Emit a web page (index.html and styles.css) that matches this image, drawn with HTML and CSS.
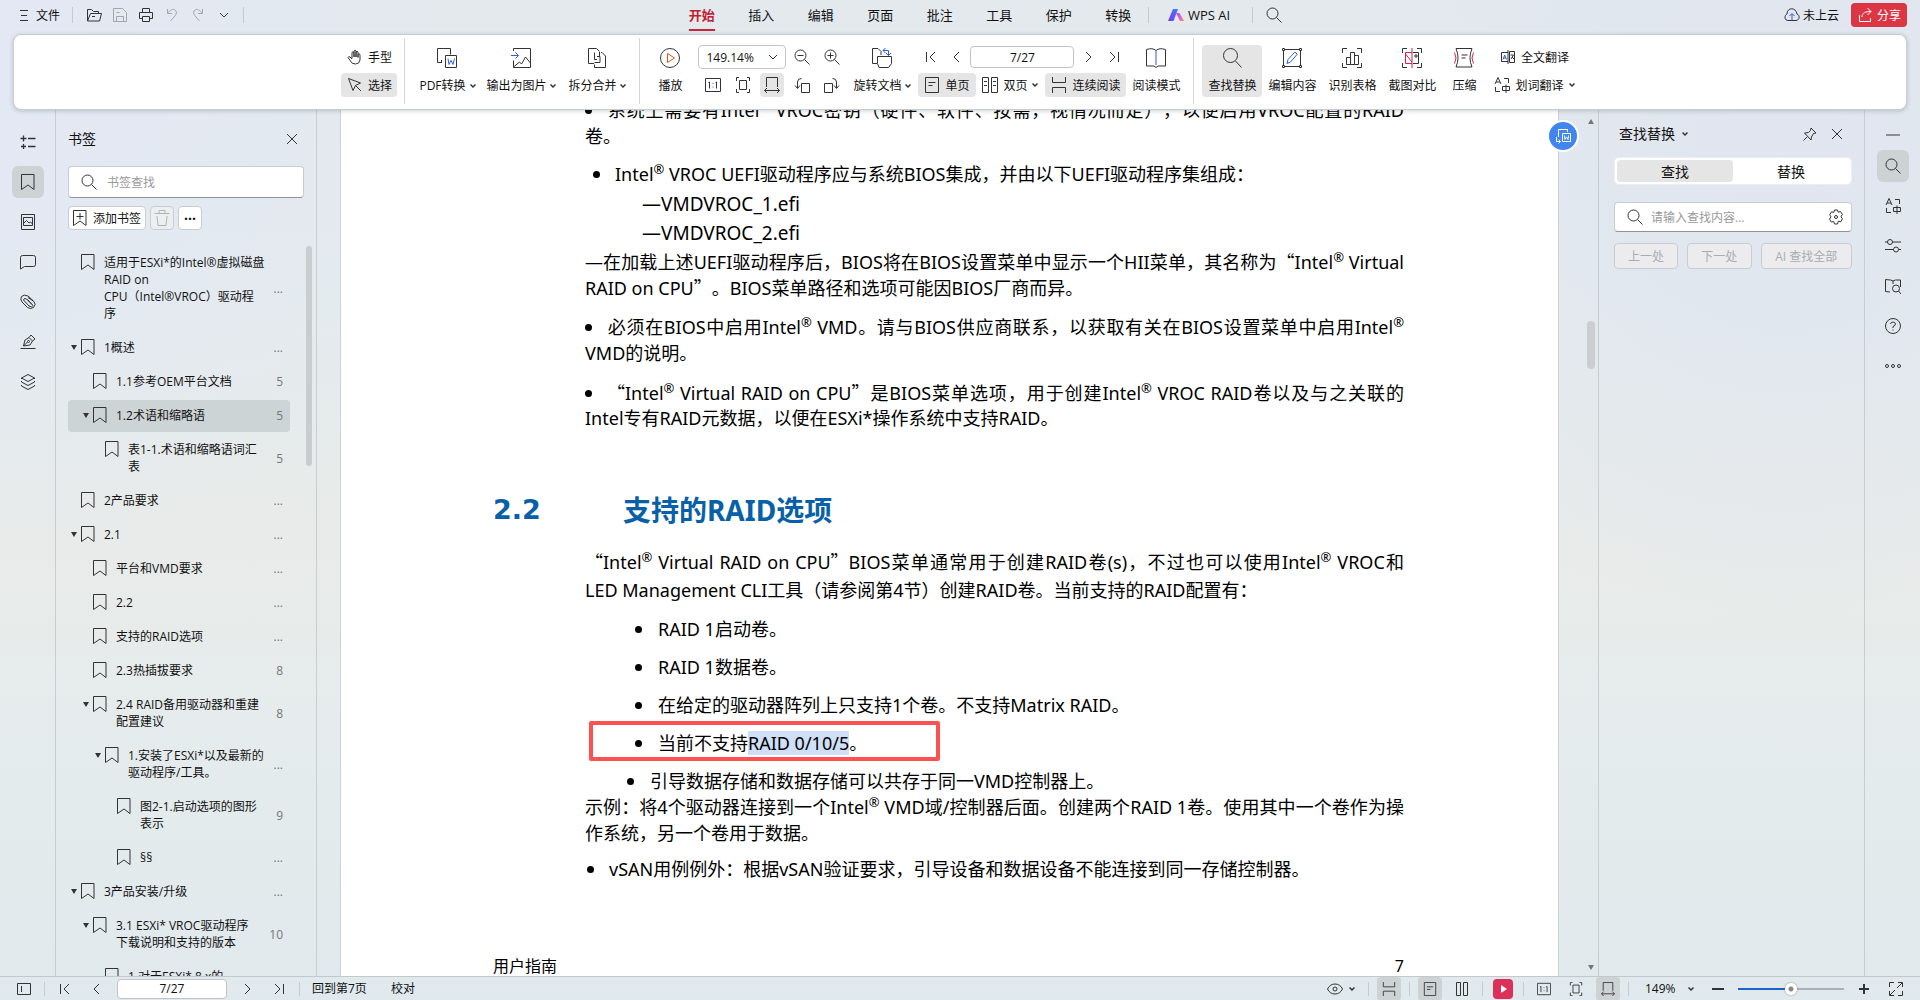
FILE: index.html
```html
<!DOCTYPE html>
<html lang="zh-CN">
<head>
<meta charset="utf-8">
<title>WPS PDF</title>
<link rel="stylesheet" href="styles.css">
</head>
<body>
<svg class="defs" aria-hidden="true">
  <symbol id="menu" viewBox="0 0 16 16"><path d="M4 3.500h8M5 8.500h6M4 13.500h8"/></symbol>
  <symbol id="folder" viewBox="0 0 16 16"><path d="M1.500 14V2.500h4l2 2h5v2M1.500 14l3-7.500h11l-2 7.500h-12M6 9.500h3"/></symbol>
  <symbol id="save" viewBox="0 0 16 16"><path d="M1.500 1.500h9l4 4v9h-13zM4.500 14.500v-5h7v5M4.500 5.500h3"/></symbol>
  <symbol id="print" viewBox="0 0 16 16"><path d="M4.500 5.500v-4h7v4M4.500 11.500h-3v-6h13v6h-3M4.500 9.500h7v5h-7z"/></symbol>
  <symbol id="undo" viewBox="0 0 16 16"><path d="M3.500 2v4.500h4.500M3.500 6.500C6 3 9 1.500 11 3c3 2.500 1 5-4.500 11"/></symbol>
  <symbol id="redo" viewBox="0 0 16 16"><path d="M12.500 2v4.500h-4.500M12.500 6.500C10 3 7 1.500 5 3c-3 2.500-1 5 4.500 11"/></symbol>
  <symbol id="chev" viewBox="0 0 10 10"><path d="M1 3l4 4 4-4"/></symbol>
  <symbol id="caret" viewBox="0 0 6 6"><path d="M.5 1.500L3 4l2.500-2.500" stroke-width="1.500"/></symbol>
  <symbol id="search" viewBox="0 0 16 16"><circle cx="6.500" cy="6.500" r="5.500"/><path d="M10.500 10.500L15.500 15.500"/></symbol>
  <symbol id="cloud" viewBox="0 0 16 16"><path d="M5 13.500C-.5 14 .5 8 3 7c0-7 9-7 10 0 3 1 3 6-1 6.500z"/><path class="blue" d="M8 13V7M5.500 9L8 6.500 10.500 9"/></symbol>
  <symbol id="share" viewBox="0 0 16 16"><path d="M2.500 8v6.500h11V11M5 10c0-4 3-5.500 9-5.500M10.500 1L14 4.500 10.500 8"/></symbol>
  <symbol id="hand" viewBox="0 0 16 16"><path d="M5 9.500V3.500q1-1.500 2 0V8 2q1-1.500 2 0v6-5q1-1.500 2 0v5.500-3q1-1.500 2 0V11q-.5 4-4.500 4T3.500 12L1 8.500q.5-1.500 2-.5l2 2"/></symbol>
  <symbol id="cursor" viewBox="0 0 16 16"><path d="M1.500 1.500l12 4.500-5 2.500L6 13.500zM8.500 8.500l5.500 5.500"/></symbol>
  <symbol id="pdfw" viewBox="0 0 20 20"><path d="M5 14.500H.5v-14H13.500v6M8.500 7.500h11v12h-11zM4.500 12v2.500"/><path class="blue" d="M11 10.500l1 6 2-4 2 4 1.500-6"/></symbol>
  <symbol id="outimg" viewBox="0 0 20 20"><path d="M2.500 3V.5h17v19h-17v-7M2.500 19l6-5 2 2 4-7 5 6"/><path class="blue" d="M0 7.500h7M4.500 4.500l3 3-3 3"/></symbol>
  <symbol id="split" viewBox="0 0 20 20"><path d="M7 15.500H1.500V.5h8l3 3M12.500 4v4.500M7.500 4.500v7H10M14 4.500h1l3.500 3.500v11.500h-11v-3M10 8.500h3v6h-5.500"/></symbol>
  <symbol id="play" viewBox="0 0 20 20"><circle cx="10" cy="10" r="9.500"/><path class="orange" d="M7.500 5.500l7 4.500-7 4.500z"/></symbol>
  <symbol id="zout" viewBox="0 0 16 16"><circle cx="6.500" cy="6.500" r="5.500"/><path d="M10.500 10.500L15.500 15.500M3.500 6.500h6"/></symbol>
  <symbol id="zin" viewBox="0 0 16 16"><circle cx="6.500" cy="6.500" r="5.500"/><path d="M10.500 10.500L15.500 15.500M3.500 6.500h6M6.500 3.500v6"/></symbol>
  <symbol id="one" viewBox="0 0 16 16"><path d="M.5 1.500h15v13h-15zM3.500 5.500l1-.5v6.500M10.500 5.500l1-.5v6.500"/><path class="blue" d="M8 6v1M8 9.500v1"/></symbol>
  <symbol id="fitp" viewBox="0 0 16 16"><path d="M4.500 3.500h7v9h-7zM1.500 4V.5H4M12 .5h2.500V4M1.500 12v3.500H4M12 15.500h2.500V12"/></symbol>
  <symbol id="fitw" viewBox="0 0 16 16"><path d="M2.500 10V.5h11V10M.5 13.500h15M3 11L.5 13.500 3 16M13 11l2.500 2.500L13 16"/></symbol>
  <symbol id="rotl" viewBox="0 0 16 16"><path d="M7.500 6.500h8v9h-8zM3.500 11V5q0-3.500 4-3.500M1 8.500l2.500 3 2.500-3"/></symbol>
  <symbol id="rotr" viewBox="0 0 16 16"><path d="M.5 6.500h8v9h-8zM12.500 11V5q0-3.500-4-3.500M10 8.500l2.500 3 2.500-3"/></symbol>
  <symbol id="rotdoc" viewBox="0 0 20 20"><path d="M5 15.500H.5V.5H6l3 3V7M7 19.500l-1.500-4v-7h14v7l-3 4z"/><path class="blue" d="M11 2.500h5.500v5M13.500 0L11 2.500 13.500 5M14 5l2.500 2.500L19 5"/></symbol>
  <symbol id="first" viewBox="0 0 12 12"><path d="M1.500 1v10M10 1L5 6l5 5"/></symbol>
  <symbol id="prev" viewBox="0 0 12 12"><path d="M8 1L3 6l5 5"/></symbol>
  <symbol id="next" viewBox="0 0 12 12"><path d="M4 1l5 5-5 5"/></symbol>
  <symbol id="last" viewBox="0 0 12 12"><path d="M10.500 1v10M2 1l5 5-5 5"/></symbol>
  <symbol id="single" viewBox="0 0 16 16"><path d="M1.500 .5h13v15h-13zM4.500 5.500h7M4.500 8.500h4"/></symbol>
  <symbol id="double" viewBox="0 0 16 16"><path d="M.5 .5h6v15h-6zM9.500 .5h6v15h-6zM2 4.500h3M2 8.500h3M11 4.500h3M11 8.500h3"/></symbol>
  <symbol id="dbl2" viewBox="0 0 16 16"><path d="M2.500 1.500h4v13h-4zM9.500 1.500h4v13h-4z"/></symbol>
  <symbol id="cont" viewBox="0 0 16 16"><path d="M1.500 0v5.500h13V0M1.500 16v-5.500h13V16"/></symbol>
  <symbol id="book" viewBox="0 0 20 20"><path d="M.5 1.500q6-2 9.500 1 3.500-3 9.500-1v16.500h-7.500l-2 1.500-2-1.500H.5z"/><path class="blue" d="M10 3v14"/></symbol>
  <symbol id="find" viewBox="0 0 20 20"><circle cx="8.500" cy="7.500" r="7"/><path d="M13.500 13l6 6.500"/></symbol>
  <symbol id="editc" viewBox="0 0 20 20"><path d="M3 1.500h14M3 18.500h14M1.500 3v14M18.500 3v14M.5 .5h2v2h-2zM17.500 .5h2v2h-2zM.5 17.500h2v2h-2zM17.500 17.500h2v2h-2z"/><path class="blue" d="M5 15.500l1-4 6.500-7q2-.5 2.500 2l-6.500 7.500z"/></symbol>
  <symbol id="table" viewBox="0 0 20 20"><path d="M5 .5H.5V5M15 .5h4.500V5M.5 15v4.500H5M19.500 15v4.500H15M4.500 9.500h4v7h-4zM8.500 4.500h4v12h-4zM12.500 7.500h4v9h-4z"/></symbol>
  <symbol id="cmp" viewBox="0 0 20 20"><path d="M5 .5H.5V5M15 .5h4.500V5M.5 15v4.500H5M19.500 15v4.500H15M11 4.500h5.500v11H11M13 7h2v2h-2z"/><path class="red" d="M10 0v20M10 4.500H3.500v11H10M3.500 6L10 14"/></symbol>
  <symbol id="zip" viewBox="0 0 20 20"><path d="M2 .5h16q-4 9.500 0 18.500H2Q6 10 2 .5zM7.500 7h6M7.500 10h4"/><path class="red" d="M.5 4.500q3 5.500 0 11M19.500 4.500q-3 5.500 0 11"/></symbol>
  <symbol id="trans" viewBox="0 0 16 16"><path d="M8 3.500H1.500v9H8M9.500 2.500h5v11h-5zM8 1v14M10.500 6h3l-2.500 4M12 8l2 2"/><path class="blue" d="M3 10.500L4.700 6l1.800 4.500M3.500 9h2.500"/></symbol>
  <symbol id="word" viewBox="0 0 16 16"><path d="M1 7L4 .5 7 7M2 5h4M10 1.500h4.500V6M1.500 10v4.500H6M8.500 9.500h7v4h-7zM12 7.500V16"/></symbol>
  <symbol id="bm" viewBox="0 0 14 16"><path d="M.5 .5h12.500v15l-6-4.500-6.500 4.500z"/></symbol>
  <symbol id="bmadd" viewBox="0 0 14 16"><path d="M.5 .5h12.500v15l-6-4.500-6.500 4.500zM7 3v6.500M3.500 6.500h7"/></symbol>
  <symbol id="trash" viewBox="0 0 16 16"><path d="M.5 3.500h15M5 3.500V.5h6v3M3 6l1 9.500h8L13 6"/></symbol>
  <symbol id="outline" viewBox="0 0 16 16"><path d="M8 4.500h7.500M8 12.500h7.500M3.500 1.500v6M.5 4.500h6M3.500 10v5M1 12.500h5" stroke-width="1.300"/></symbol>
  <symbol id="thumb" viewBox="0 0 16 16"><path d="M1.500 .5h13v15h-13zM3.500 3.500h9v8h-9zM3.500 9.500l3-3 2.500 2.500 1.500-1 2 2"/></symbol>
  <symbol id="comment" viewBox="0 0 16 16"><path d="M2.500 1.500h11q2 0 2 2v7q0 2-2 2H4.500L.5 15V3.500q0-2 2-2z"/></symbol>
  <symbol id="clip" viewBox="0 0 16 16"><path d="M13 6.500L8 2Q4 0 1.500 2.500 0 5 2 8l5.500 5.500q3 2 6 0 3-3 .5-6L8 3.500M12 10.500L6.500 5Q4 3.500 3.500 6L9 12q3 2 4-.5L7.500 5.500"/></symbol>
  <symbol id="pen" viewBox="0 0 16 16"><path d="M.5 14.500h15M3.500 12l1.500-6 4-2.500 3.500 3.500-2.500 4zM9 3.500L11 1l4 4-2.500 2M3.500 12l4-4"/><circle cx="8.500" cy="7.500" r="1"/></symbol>
  <symbol id="layers" viewBox="0 0 16 16"><path d="M8 .5l6.500 3.500L8 7.500 1.500 4zM1.500 7v1L8 11.500 14.500 8V7M1.500 11v1L8 15.500 14.500 12v-1M1.500 4v1M14.500 4v1"/></symbol>
  <symbol id="x" viewBox="0 0 12 12"><path d="M1 1l10 10M11 1L1 11"/></symbol>
  <symbol id="pin" viewBox="0 0 14 14"><path d="M8 1l5 5-2.500.5L8.500 10l-.5 3L1.500 6l4-.5 2-2zM4.500 9.500L.5 13.500"/></symbol>
  <symbol id="gear" viewBox="0 0 16 16"><path d="M6.500 1h3l.7 2.200 2.300-.7 1.800 2.800L13 7.800l1.500 2-1.800 3-2.400-.7L9.500 15h-3l-.8-2.500-2.400.6-1.800-3L3 7.800l-1.300-2 1.800-3 2.300.6z"/><circle cx="8" cy="8" r="1.500"/></symbol>
  <symbol id="sliders" viewBox="0 0 16 16"><circle cx="5" cy="4" r="2.500"/><circle cx="11" cy="11.500" r="2.500"/><path d="M0 4h2.500M7.500 4H16M0 11.500h8.500M13.500 11.500H16"/></symbol>
  <symbol id="dict" viewBox="0 0 16 16"><path d="M5 14L.5 13.500V1.500l5 .5L8 3l2.500-1h5v7M8 3v3"/><circle cx="11" cy="10.500" r="3.500"/><path d="M13.500 13l2.500 3"/></symbol>
  <symbol id="help" viewBox="0 0 16 16"><circle cx="8" cy="8" r="7.500"/><path d="M5.500 6Q6 4 8 4t2.500 2Q10.500 7.500 8 8.500V10M8 11.500v1"/></symbol>
  <symbol id="dots" viewBox="0 0 16 16"><circle cx="2" cy="8" r="1.500"/><circle cx="8" cy="8" r="1.500"/><circle cx="14" cy="8" r="1.500"/></symbol>
  <symbol id="side" viewBox="0 0 16 16"><path d="M1.500 2.500h13v11h-13zM5.500 5v6"/></symbol>
  <symbol id="eye" viewBox="0 0 16 16"><path d="M.5 8Q3 3 8 3t7.500 5Q13 13 8 13T.5 8z"/><circle cx="8" cy="8" r="2"/></symbol>
  <symbol id="minus" viewBox="0 0 12 12"><path d="M0 6h12" stroke-width="2"/></symbol>
  <symbol id="plus" viewBox="0 0 12 12"><path d="M1 6h10M6 1v10" stroke-width="2"/></symbol>
  <symbol id="full" viewBox="0 0 14 14"><path d="M5 .5H.5V5M9 .5h4.500V5M13.500 9v4.500H9M5 13.500H.5V9M8 6l5-5M6 8l-5 5"/></symbol>
</svg>

<header class="topbar">
  <div class="quick">
    <button class="file"><svg class="s16"><use href="#menu"/></svg>文件</button>
    <i class="vsep"></i>
    <button class="qb" aria-label="打开"><svg class="s16"><use href="#folder"/></svg></button>
    <button class="qb dim" aria-label="保存"><svg class="s16"><use href="#save"/></svg></button>
    <button class="qb" aria-label="打印"><svg class="s16"><use href="#print"/></svg></button>
    <button class="qb dim" aria-label="撤销"><svg class="s16"><use href="#undo"/></svg></button>
    <button class="qb dim" aria-label="重做"><svg class="s16"><use href="#redo"/></svg></button>
    <button class="qb" aria-label="更多"><svg class="s10"><use href="#chev"/></svg></button>
    <i class="vsep"></i>
  </div>
  <nav class="tabs">
    <button class="active">开始</button><button>插入</button><button>编辑</button><button>页面</button><button>批注</button><button>工具</button><button>保护</button><button>转换</button>
  </nav>
  <i class="vsep"></i>
  <button class="ai"><svg class="logo" viewBox="0 0 16 14"><defs><linearGradient id="g1" x1="0" y1="1" x2="1" y2="0"><stop offset="0" stop-color="#7a3cf0"/><stop offset="1" stop-color="#3a7bfa"/></linearGradient><linearGradient id="g2" x1="0" y1="0" x2="1" y2="1"><stop offset="0" stop-color="#b24df5"/><stop offset="1" stop-color="#ff7d8c"/></linearGradient></defs><path d="M0 13L5 1h5L5.500 13z" fill="url(#g1)"/><path d="M8 5h3.500L16 13h-4z" fill="url(#g2)"/></svg>WPS AI</button>
  <i class="vsep"></i>
  <button class="qb top-find" aria-label="搜索"><svg class="s16"><use href="#search"/></svg></button>
  <div class="account">
    <button class="cloud"><svg class="s16"><use href="#cloud"/></svg>未上云</button>
    <button class="share"><svg class="s16"><use href="#share"/></svg>分享</button>
  </div>
</header>

<section class="ribbon">
  <div class="stack mode">
    <button class="sm"><svg class="s16"><use href="#hand"/></svg>手型</button>
    <button class="sm on"><svg class="s16"><use href="#cursor"/></svg>选择</button>
  </div>
  <i class="rsep"></i>
  <button class="big w72"><svg class="s20"><use href="#pdfw"/></svg><span>PDF转换<svg class="s6"><use href="#caret"/></svg></span></button>
  <button class="big w76"><svg class="s20"><use href="#outimg"/></svg><span>输出为图片<svg class="s6"><use href="#caret"/></svg></span></button>
  <button class="big w76"><svg class="s20"><use href="#split"/></svg><span>拆分合并<svg class="s6"><use href="#caret"/></svg></span></button>
  <i class="rsep"></i>
  <button class="big w44"><svg class="s20"><use href="#play"/></svg><span>播放</span></button>
  <div class="stack zoom">
    <div class="line">
      <div class="combo"><select aria-label="缩放比例"><option>149.14%</option></select><svg class="s10"><use href="#chev"/></svg></div>
      <button class="ic" aria-label="缩小"><svg class="s16"><use href="#zout"/></svg></button>
      <button class="ic" aria-label="放大"><svg class="s16"><use href="#zin"/></svg></button>
    </div>
    <div class="line spread">
      <button class="ic" aria-label="实际大小"><svg class="s16"><use href="#one"/></svg></button>
      <button class="ic" aria-label="适合页面"><svg class="s16"><use href="#fitp"/></svg></button>
      <button class="ic on" aria-label="适合宽度"><svg class="s16"><use href="#fitw"/></svg></button>
      <button class="ic" aria-label="左旋"><svg class="s16"><use href="#rotl"/></svg></button>
      <button class="ic" aria-label="右旋"><svg class="s16"><use href="#rotr"/></svg></button>
    </div>
  </div>
  <button class="big w72"><svg class="s20"><use href="#rotdoc"/></svg><span>旋转文档<svg class="s6"><use href="#caret"/></svg></span></button>
  <div class="stack pages">
    <div class="line spread">
      <button class="ic" aria-label="首页"><svg class="s12"><use href="#first"/></svg></button>
      <button class="ic" aria-label="上一页"><svg class="s12"><use href="#prev"/></svg></button>
      <input class="pageno" aria-label="页码" value="7/27">
      <button class="ic" aria-label="下一页"><svg class="s12"><use href="#next"/></svg></button>
      <button class="ic" aria-label="末页"><svg class="s12"><use href="#last"/></svg></button>
    </div>
    <div class="line between">
      <button class="sm on"><svg class="s16"><use href="#single"/></svg>单页</button>
      <button class="sm"><svg class="s16"><use href="#double"/></svg>双页<svg class="s6"><use href="#caret"/></svg></button>
      <button class="sm on"><svg class="s16"><use href="#cont"/></svg>连续阅读</button>
    </div>
  </div>
  <button class="big w60"><svg class="s20"><use href="#book"/></svg><span>阅读模式</span></button>
  <i class="rsep"></i>
  <button class="big w60 on"><svg class="s20"><use href="#find"/></svg><span>查找替换</span></button>
  <button class="big w60"><svg class="s20"><use href="#editc"/></svg><span>编辑内容</span></button>
  <button class="big w60"><svg class="s20"><use href="#table"/></svg><span>识别表格</span></button>
  <button class="big w60"><svg class="s20"><use href="#cmp"/></svg><span>截图对比</span></button>
  <button class="big w44"><svg class="s20"><use href="#zip"/></svg><span>压缩</span></button>
  <div class="stack tail">
    <button class="sm"><svg class="s16"><use href="#trans"/></svg>全文翻译</button>
    <button class="sm"><svg class="s16"><use href="#word"/></svg>划词翻译<svg class="s6"><use href="#caret"/></svg></button>
  </div>
</section>

<main class="work">
  <nav class="rail">
    <button aria-label="大纲"><svg class="s16"><use href="#outline"/></svg></button>
    <button class="on" aria-label="书签"><svg class="bmi"><use href="#bm"/></svg></button>
    <button aria-label="缩略图"><svg class="s16"><use href="#thumb"/></svg></button>
    <button aria-label="批注"><svg class="s16"><use href="#comment"/></svg></button>
    <button aria-label="附件"><svg class="s16"><use href="#clip"/></svg></button>
    <button aria-label="签名"><svg class="s16"><use href="#pen"/></svg></button>
    <button aria-label="图层"><svg class="s16"><use href="#layers"/></svg></button>
  </nav>

  <aside class="marks">
    <div class="head"><h2>书签</h2><button class="ic" aria-label="关闭"><svg class="s12"><use href="#x"/></svg></button></div>
    <label class="field"><svg class="s16"><use href="#search"/></svg><input type="text" placeholder="书签查找" aria-label="书签查找"></label>
    <div class="acts">
      <button class="add"><svg class="bmi"><use href="#bmadd"/></svg>添加书签</button>
      <button class="sq" disabled aria-label="删除"><svg class="s16"><use href="#trash"/></svg></button>
      <button class="sq more" aria-label="更多">···</button>
    </div>
    <ul class="tree">
      <li><i></i><svg class="bmi"><use href="#bm"/></svg><a href="#">适用于ESXi*的Intel®虚拟磁盘<br>RAID on<br>CPU（Intel®VROC）驱动程<br>序</a><b>...</b></li>
      <li><i class="open"></i><svg class="bmi"><use href="#bm"/></svg><a href="#">1概述</a><b>...</b></li>
      <li class="l1"><i></i><svg class="bmi"><use href="#bm"/></svg><a href="#">1.1参考OEM平台文档</a><b>5</b></li>
      <li class="l1 on"><i class="open"></i><svg class="bmi"><use href="#bm"/></svg><a href="#">1.2术语和缩略语</a><b>5</b></li>
      <li class="l2"><i></i><svg class="bmi"><use href="#bm"/></svg><a href="#">表1-1.术语和缩略语词汇<br>表</a><b>5</b></li>
      <li><i></i><svg class="bmi"><use href="#bm"/></svg><a href="#">2产品要求</a><b>...</b></li>
      <li><i class="open"></i><svg class="bmi"><use href="#bm"/></svg><a href="#">2.1</a><b>...</b></li>
      <li class="l1"><i></i><svg class="bmi"><use href="#bm"/></svg><a href="#">平台和VMD要求</a><b>...</b></li>
      <li class="l1"><i></i><svg class="bmi"><use href="#bm"/></svg><a href="#">2.2</a><b>...</b></li>
      <li class="l1"><i></i><svg class="bmi"><use href="#bm"/></svg><a href="#">支持的RAID选项</a><b>...</b></li>
      <li class="l1"><i></i><svg class="bmi"><use href="#bm"/></svg><a href="#">2.3热插拔要求</a><b>8</b></li>
      <li class="l1"><i class="open"></i><svg class="bmi"><use href="#bm"/></svg><a href="#">2.4 RAID备用驱动器和重建<br>配置建议</a><b>8</b></li>
      <li class="l2"><i class="open"></i><svg class="bmi"><use href="#bm"/></svg><a href="#">1.安装了ESXi*以及最新的<br>驱动程序/工具。</a><b>...</b></li>
      <li class="l3"><i></i><svg class="bmi"><use href="#bm"/></svg><a href="#">图2-1.启动选项的图形<br>表示</a><b>9</b></li>
      <li class="l3"><i></i><svg class="bmi"><use href="#bm"/></svg><a href="#">§§</a><b>...</b></li>
      <li><i class="open"></i><svg class="bmi"><use href="#bm"/></svg><a href="#">3产品安装/升级</a><b>...</b></li>
      <li class="l1"><i class="open"></i><svg class="bmi"><use href="#bm"/></svg><a href="#">3.1 ESXi* VROC驱动程序<br>下载说明和支持的版本</a><b>10</b></li>
      <li class="l2"><i></i><svg class="bmi"><use href="#bm"/></svg><a href="#">1.对于ESXi* 8.x的</a><b></b></li>
    </ul>
    <span class="thumbbar"></span>
  </aside>

  <section class="viewer">
    <article class="page">
      <div class="body">
        <p class="top"><span class="fill"><s></s>系统上需要有Intel<sup>®</sup> VROC密钥（硬件、软件、按需，视情况而定），以便启用VROC配置的RAID</span>卷。</p>
        <p class="uefi"><s></s>Intel<sup>®</sup> VROC UEFI驱动程序应与系统BIOS集成，并由以下UEFI驱动程序集组成：</p>
        <p class="efi">—VMDVROC_1.efi<br>—VMDVROC_2.efi</p>
        <p><span class="fill">—在加载上述UEFI驱动程序后，BIOS将在BIOS设置菜单中显示一个HII菜单，其名称为<q>“</q>Intel<sup>®</sup> Virtual</span>RAID on CPU<q>”</q>。BIOS菜单路径和选项可能因BIOS厂商而异。</p>
        <p><span class="fill"><s></s>必须在BIOS中启用Intel<sup>®</sup> VMD。请与BIOS供应商联系，以获取有关在BIOS设置菜单中启用Intel<sup>®</sup></span>VMD的说明。</p>
        <p><span class="fill"><s></s><q>“</q>Intel<sup>®</sup> Virtual RAID on CPU<q>”</q>是BIOS菜单选项，用于创建Intel<sup>®</sup> VROC RAID卷以及与之关联的</span>Intel专有RAID元数据，以便在ESXi*操作系统中支持RAID。</p>
      </div>
      <h1><span>2.2</span>支持的RAID选项</h1>
      <div class="body">
        <p class="loose"><span class="fill"><q>“</q>Intel<sup>®</sup> Virtual RAID on CPU<q>”</q>BIOS菜单通常用于创建RAID卷(s)，不过也可以使用Intel<sup>®</sup> VROC和</span>LED Management CLI工具（请参阅第4节）创建RAID卷。当前支持的RAID配置有：</p>
        <ul class="opts">
          <li><s></s>RAID 1启动卷。</li>
          <li><s></s>RAID 1数据卷。</li>
          <li><s></s>在给定的驱动器阵列上只支持1个卷。不支持Matrix RAID。</li>
          <li class="boxed"><s></s>当前不支持<mark>RAID 0/10/5</mark>。</li>
          <li class="near"><s></s>引导数据存储和数据存储可以共存于同一VMD控制器上。</li>
        </ul>
        <p class="flush"><span class="fill">示例：将4个驱动器连接到一个Intel<sup>®</sup> VMD域/控制器后面。创建两个RAID 1卷。使用其中一个卷作为操</span>作系统，另一个卷用于数据。</p>
        <p class="note"><s></s>vSAN用例例外：根据vSAN验证要求，引导设备和数据设备不能连接到同一存储控制器。</p>
      </div>
      <footer><span>用户指南</span><span>7</span></footer>
    </article>
    <button class="float" aria-label="转为Word"><svg class="s16" viewBox="0 0 16 16"><path d="M3.500 9V1.500h9V4M7.500 5.500h8v8h-8zM1.500 9v4.500H5M3.500 11.500l2 2-2 2M9.500 7.500l.5 4 1.500-2.500L13 11.500l.5-4"/></svg></button>
    <div class="vbar"><i class="up"></i><span></span><i class="down"></i></div>
  </section>

  <aside class="finder">
    <div class="head"><h2>查找替换<svg class="s6"><use href="#caret"/></svg></h2><button class="ic" aria-label="固定"><svg class="s14"><use href="#pin"/></svg></button><button class="ic" aria-label="关闭"><svg class="s12"><use href="#x"/></svg></button></div>
    <div class="seg"><button class="on">查找</button><button>替换</button></div>
    <label class="field"><svg class="s16"><use href="#search"/></svg><input type="text" placeholder="请输入查找内容..." aria-label="查找内容"><svg class="s16"><use href="#gear"/></svg></label>
    <div class="finds"><button disabled>上一处</button><button disabled>下一处</button><button class="wide" disabled>AI 查找全部</button></div>
  </aside>

  <nav class="rail right">
    <span class="dash"></span>
    <button class="on" aria-label="查找"><svg class="s16"><use href="#search"/></svg></button>
    <button aria-label="翻译"><svg class="s16"><use href="#word"/></svg></button>
    <button aria-label="设置"><svg class="s16"><use href="#sliders"/></svg></button>
    <button aria-label="词典"><svg class="s16"><use href="#dict"/></svg></button>
    <button aria-label="帮助"><svg class="s16"><use href="#help"/></svg></button>
    <button aria-label="更多"><svg class="s16"><use href="#dots"/></svg></button>
  </nav>
</main>

<footer class="status">
  <button class="ic" aria-label="侧栏"><svg class="s16"><use href="#side"/></svg></button>
  <i class="vsep"></i>
  <button class="ic" aria-label="首页"><svg class="s12"><use href="#first"/></svg></button>
  <button class="ic" aria-label="上一页"><svg class="s12"><use href="#prev"/></svg></button>
  <input class="pageno" aria-label="页码" value="7/27">
  <button class="ic" aria-label="下一页"><svg class="s12"><use href="#next"/></svg></button>
  <button class="ic" aria-label="末页"><svg class="s12"><use href="#last"/></svg></button>
  <i class="vsep"></i>
  <button class="txt">回到第7页</button>
  <button class="txt">校对</button>
  <div class="view">
    <button class="eye" aria-label="护眼"><svg class="s16"><use href="#eye"/></svg><svg class="s6"><use href="#caret"/></svg></button>
    <i class="vsep"></i>
    <button class="ic on" aria-label="连续阅读"><svg class="s14"><use href="#cont"/></svg></button>
    <i class="vsep"></i>
    <button class="ic on" aria-label="单页"><svg class="s14"><use href="#single"/></svg></button>
    <button class="ic" aria-label="双页"><svg class="s16"><use href="#dbl2"/></svg></button>
    <i class="vsep"></i>
    <button class="go" aria-label="播放"></button>
    <i class="vsep"></i>
    <button class="ic" aria-label="实际大小"><svg class="s14"><use href="#one"/></svg></button>
    <button class="ic" aria-label="适合页面"><svg class="s14"><use href="#fitp"/></svg></button>
    <button class="ic on" aria-label="适合宽度"><svg class="s14"><use href="#fitw"/></svg></button>
    <i class="vsep"></i>
    <div class="pct"><select aria-label="缩放"><option>149%</option></select><svg class="s6"><use href="#caret"/></svg></div>
    <button class="ic" aria-label="缩小"><svg class="s12"><use href="#minus"/></svg></button>
    <input type="range" min="0" max="100" value="50" aria-label="缩放">
    <button class="ic" aria-label="放大"><svg class="s12"><use href="#plus"/></svg></button>
    <button class="ic" aria-label="全屏"><svg class="s14"><use href="#full"/></svg></button>
  </div>
</footer>
</body>
</html>
```
FILE: styles.css
```css
*, *::before, *::after { box-sizing: border-box; }
body {
  margin: 0;
  height: 100vh;
  display: flex;
  flex-direction: column;
  overflow: hidden;
  color: #111;
  font: 12px/17px "Open Sans", "Noto Sans CJK SC", sans-serif;
  text-spacing-trim: space-all;
  background:
    radial-gradient(circle at 0 8%, #e3e8f5 0, transparent 22%),
    radial-gradient(circle at 93% 15%, #e0e5f0 0, transparent 24%),
    linear-gradient(180deg, #e3e9ed 0, #e4ebed 30%, #e8ebe9 55%, #e6ecec 70%, #e0e9ed 100%);
}
h1, h2, p, ul { margin: 0; padding: 0; font-weight: 400; list-style: none; }
button, input, select { font: inherit; color: inherit; }
button {
  display: flex; align-items: center; justify-content: center;
  padding: 0; border: 0; border-radius: 4px; background: none; white-space: nowrap;
}
a { color: inherit; text-decoration: none; }
svg { flex: none; fill: none; stroke: #333; stroke-width: 1; overflow: visible; }
.defs { position: absolute; width: 0; height: 0; }
.blue { stroke: #2f5fe0; }
.orange { stroke: #d8581c; }
.red { stroke: #d0214a; }
.s6 { width: 6px; height: 6px; }
.s10 { width: 10px; height: 10px; }
.s12 { width: 12px; height: 12px; }
.s14 { width: 14px; height: 14px; }
.s16 { width: 16px; height: 16px; }
.s20 { width: 20px; height: 20px; }
.bmi { width: 14px; height: 16px; }
.ic { width: 24px; height: 24px; }
.on { background: #e5e5e5; }
.vsep { flex: none; width: 1px; height: 16px; background: #c6cbce; }

/* title bar */
.topbar { flex: none; height: 34px; display: flex; align-items: center; padding-bottom: 4px; }
.quick { flex: 0 0 35%; display: flex; align-items: center; padding-left: 16px; }
.file { gap: 4px; margin-right: 12px; }
.qb { width: 26px; height: 24px; }
.quick .vsep + .qb { margin-left: 8px; }
.quick .qb + .vsep { margin-left: 6px; }
.dim svg { stroke: #a3a7aa; }
.tabs { width: 476px; display: grid; grid-template-columns: repeat(8, 1fr); justify-items: center; }
.tabs button { height: 28px; font-size: 13px; border-radius: 0; margin-top: 3px; border-bottom: 2px solid transparent; }
.tabs .active { color: #c01f33; font-weight: 700; border-color: #c8273a; }
.ai { margin: 0 22px 0 19px; font-size: 13px; gap: 4px; }
.logo { width: 16px; height: 14px; stroke: none; }
.top-find { margin-left: 8px; }
.account { margin-left: auto; display: flex; gap: 12px; padding-right: 13px; }
.cloud { gap: 3px; }
.share { width: 56px; height: 24px; gap: 4px; color: #fff; background: #dc3644; }
.share svg { stroke: #fff; }

/* ribbon */
.ribbon {
  position: relative; z-index: 2; flex: none; height: 76px; margin: 0 13px; padding-bottom: 2px;
  display: flex; align-items: center; justify-content: center;
  background: #fff; border: 1px solid #c9cdd0; border-radius: 8px;
  box-shadow: 0 1px 4px rgba(60, 70, 80, .25);
}
.rsep { width: 1px; height: 66px; background: #d4d6d8; margin: 0 6px 0 7px; }
.w76 + .rsep { margin: 0 8px 0 4px; }
.w60 + .rsep { margin: 0 8px 0 7px; }
.stack { display: flex; flex-direction: column; gap: 4px; }
.mode { width: 56px; }
.tail { margin-left: 4px; }
.sm { height: 24px; gap: 5px; padding: 0 4px; }
.line { display: flex; align-items: center; height: 24px; }
.spread { justify-content: space-around; }
.between { justify-content: space-between; }
.big { flex-direction: column; justify-content: space-between; height: 52px; padding: 3px 0; }
.big span { display: flex; align-items: center; gap: 4px; }
.w44 { width: 44px; }
.w60 { width: 60px; }
.w72 { width: 72px; }
.w76 { width: 76px; }
.zoom { width: 148px; margin-left: 6px; }
.zoom .combo { width: 88px; margin-right: 4px; }
.zoom .ic + .ic { margin-left: 6px; }
.zoom .spread .ic + .ic { margin-left: 0; }
.combo { display: flex; align-items: center; height: 24px; padding: 0 7px; border: 1px solid #c4c8cb; border-radius: 4px; }
select { appearance: none; flex: 1; min-width: 0; padding: 0; border: 0; background: none; }
.pages { width: 208px; }
.pages .between .sm { padding: 0 6px; }
.pageno { width: 104px; height: 22px; padding: 0; text-align: center; background: #fff; border: 1px solid #c0c4c7; border-radius: 4px; }

/* side rails */
.work { flex: 1; min-height: 0; display: flex; margin-top: -1px; }
.rail { flex: none; width: 56px; padding-top: 17px; display: flex; flex-direction: column; align-items: center; gap: 8px; border-right: 1px solid #c8cdd0; }
.rail button { width: 32px; height: 32px; border-radius: 6px; }
.rail .on { background: #cdd2d5; }
.right { width: 55px; border: 0; }
.dash { width: 14px; height: 10px; margin: 0 0 6px; border-bottom: 2px solid #8d9092; }

/* bookmarks */
.marks { position: relative; flex: none; width: 261px; padding: 18px 12px 0; border-right: 1px solid #c8cdd0; display: flex; flex-direction: column; overflow: hidden; }
.head { flex: none; display: flex; align-items: center; height: 24px; }
h2 { font-size: 14px; line-height: 24px; margin-right: auto; display: flex; align-items: center; gap: 7px; }
.field { flex: none; display: flex; align-items: center; gap: 10px; height: 32px; padding: 0 12px; background: #fff; border: 1px solid #c9cdd0; border-bottom-color: #8f9396; border-radius: 4px; }
.field input { flex: 1; min-width: 0; padding: 0; border: 0; outline: 0; background: none; }
::placeholder { color: #999; opacity: 1; }
.marks .field { margin-top: 15px; }
.acts { flex: none; display: flex; gap: 4px; margin: 8px 0 17px; }
.acts button { height: 24px; background: #fff; border: 1px solid #c9cdd0; }
.acts .add { width: 78px; gap: 6px; }
.acts .sq { width: 24px; }
.acts .more { font-weight: 700; font-size: 14px; }
.acts [disabled] { background: #eceff0; }
.acts [disabled] svg { stroke: #b0b4b6; }
.tree li { display: flex; width: 222px; margin-bottom: 2px; padding: 7px 7px 8px 3px; border-radius: 4px; }
.tree .l1 { padding-left: 15px; }
.tree .l2 { padding-left: 27px; }
.tree .l3 { padding-left: 39px; }
.tree .on { background: #cdd4d5; }
.tree i { width: 10px; flex: none; }
.tree .open::before { content: ""; display: block; margin-top: 6px; width: 6px; border: 3px solid transparent; border-top: 5px solid #333; border-bottom: 0; }
.tree svg { margin-right: 9px; }
.tree a { flex: 1; white-space: nowrap; }
.tree b { flex: none; align-self: center; font-weight: 400; color: #777; }
.thumbbar { position: absolute; right: 4px; top: 137px; width: 6px; height: 220px; border-radius: 3px; background: #c9cdcf; }

/* document */
.viewer { position: relative; flex: 1; min-width: 0; display: flex; padding-left: 23px; border-right: 1px solid #c8cdd0; }
.page {
  flex: 1; min-width: 0; overflow: hidden; display: flex; flex-direction: column;
  padding: 0 154px 0 152px; background: #fff; color: #000;
  border: 1px solid #ccd1d4; border-width: 0 1px;
  font: 18px/26px "Noto Sans", "Noto Sans CJK SC", sans-serif; white-space: nowrap;
}
.page > * { flex: none; }
.body { padding-left: 92px; }
.body p { margin-bottom: 13px; }
.body .top { margin: -12px 0 12px; }
.fill { display: block; text-align: justify; text-align-last: justify; white-space: normal; height: 26px; }
s { display: inline-block; width: 7px; height: 7px; margin-right: 15px; border-radius: 50%; background: #000; vertical-align: 3px; }
q { quotes: none; font-family: "Noto Sans CJK SC", sans-serif; }
sup { font-size: 13px; line-height: 0; vertical-align: 7px; }
.body .uefi { margin: 0 0 3px; padding-left: 8px; }
.body .efi { line-height: 29px; margin: 0 0 0 57px; font-size: 19px; }
h1 { display: flex; margin: 46px 0 17px; font-size: 28px; line-height: 40px; font-weight: 700; color: #0860a8; }
h1 span { width: 130px; font: 700 27px/40px "DejaVu Sans", sans-serif; }
.body .loose { line-height: 29px; margin: 0 0 11px; }
.loose .fill { height: 29px; }
.opts { display: flex; flex-direction: column; gap: 12px; padding-left: 50px; }
.opts s { margin-right: 16px; }
.opts .near { margin-left: -8px; }
.boxed { position: relative; }
.boxed::after { content: ""; position: absolute; left: -46px; top: -9px; width: 351px; height: 40px; border: 4px solid #fc5252; border-radius: 2px; }
mark { background: #cfdff8; color: inherit; }
.body .flush { margin: 0 0 10px; }
.body .note { margin: 0; padding-left: 2px; }
.page footer { display: flex; justify-content: space-between; font-size: 16px; margin-top: 71px; }
.float { position: absolute; right: 19px; top: 11px; width: 32px; height: 32px; border-radius: 50%; border: 2px solid #fff; background: #4186f0; }
.float svg { stroke: #fff; }
.vbar { flex: none; width: 39px; display: flex; flex-direction: column; align-items: center; padding: 10px 0 6px 24px; }
.vbar i { width: 6px; border: 3px solid transparent; }
.vbar .up { border-bottom: 5px solid #777; border-top: 0; }
.vbar .down { border-top: 5px solid #777; border-bottom: 0; margin-top: auto; }
.vbar span { width: 8px; height: 48px; margin-top: 197px; border-radius: 4px; background: #cbcdd0; }

/* find and replace */
.finder { flex: none; width: 266px; padding: 13px 12px 0 15px; border-right: 1px solid #c8cdd0; }
.finder h2 { padding-left: 5px; }
.finder .head { padding-right: 3px; }
.finder .ic + .ic { margin-left: 3px; }
.seg { display: flex; height: 28px; margin: 11px 0 17px; padding: 2px; background: #fff; border: 1px solid #eceff1; border-radius: 5px; }
.seg button { flex: 1; font-size: 14px; }
.finder .field { height: 30px; gap: 8px; padding: 0 7px 0 12px; }
.finds { display: flex; gap: 9px; margin-top: 11px; }
.finds button { flex: 64 1 0; height: 26px; color: #a9acae; background: #ececee; border: 1px solid #c9cdd0; }
.finds .wide { flex-grow: 92; }

/* status bar */
.status { flex: none; height: 24px; display: flex; align-items: center; padding: 0 12px; border-top: 1px solid #c2c8cb; }
.status .vsep { margin: 0 8px; height: 14px; }
.status .ic + .ic, .status .ic + .pageno { margin-left: 8px; }
.status .pageno { width: 110px; height: 20px; }
.status > .pageno + .ic { margin-left: 8px; }
.status .txt { margin-left: 4px; margin-right: 20px; }
.status .on { background: #cdd2d5; }
.view { display: flex; align-items: center; margin-left: auto; }
.eye { width: 38px; gap: 6px; }
.go { width: 20px; height: 20px; background: #dc3058; margin: 0 2px; }
.go::before { content: ""; margin-left: 2px; border: 4px solid transparent; border-left: 6px solid #fff; border-right: 0; }
.pct { display: flex; align-items: center; width: 55px; margin: 0 6px 0 8px; }
.pct svg { margin-right: 6px; }
input[type=range] { appearance: none; width: 106px; height: 12px; margin: 0 8px; background: linear-gradient(#1e62d0, #1e62d0) 0 5px / 50% 2px no-repeat, linear-gradient(#aab0b3, #aab0b3) 0 5px / 100% 2px no-repeat; }
input[type=range]::-webkit-slider-thumb { appearance: none; width: 12px; height: 12px; border-radius: 50%; background: radial-gradient(circle, #888 0 2px, #fff 3px); box-shadow: 0 0 2px #777; }
```
